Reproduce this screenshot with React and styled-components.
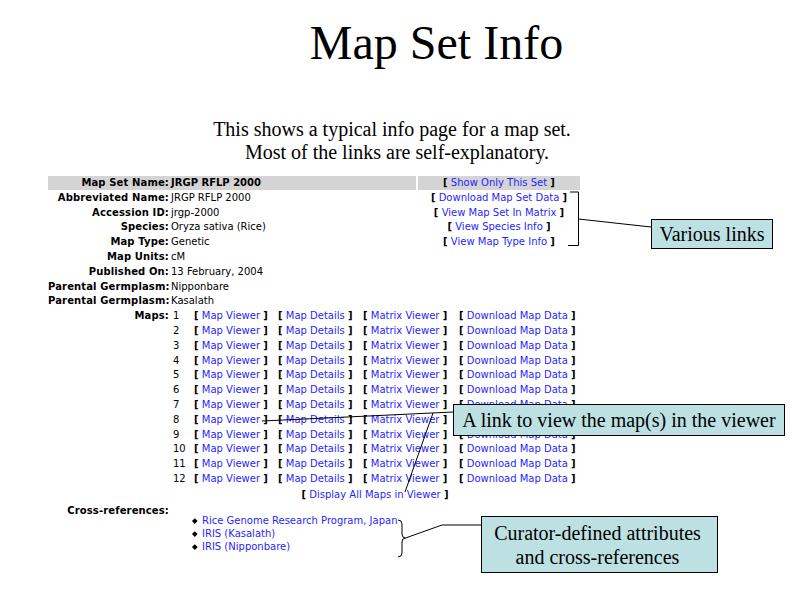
import React from "react";
import styled, { createGlobalStyle } from "styled-components";

const GlobalStyle = createGlobalStyle`
  html, body {
    margin: 0;
    padding: 0;
    background: #fff;
  }
`;

const Slide = styled.div`
  position: relative;
  width: 800px;
  height: 600px;
  overflow: hidden;
  background: #fff;
`;

const Title = styled.h1`
  margin: 19px 0 0;
  padding-left: 73px;
  text-align: center;
  font-family: "Liberation Serif", "Times New Roman", serif;
  font-weight: normal;
  font-size: 48px;
  line-height: 48px;
  color: #000;
`;

const Intro = styled.div`
  margin-top: 50.5px;
  font-family: "Liberation Serif", "Times New Roman", serif;
  font-size: 20px;
  line-height: 23px;
  color: #000;
`;

// $shift = how far the line's centre sits right of the page centre
const IntroLine = styled.div`
  text-align: center;
  padding-left: ${(p) => (p.$shift > 0 ? p.$shift * 2 : 0)}px;
  padding-right: ${(p) => (p.$shift < 0 ? -p.$shift * 2 : 0)}px;
`;

const Info = styled.div`
  margin: 12.5px 0 0 48px;
  width: 532px;
  font-family: "DejaVu Sans", sans-serif;
  font-size: 10px;
  color: #000;
  white-space: nowrap;
`;

const Row = styled.div`
  display: grid;
  grid-template-columns: 122px 246px 164px;
  height: 14.8px;
  line-height: 14px;
`;

const Label = styled.div`
  height: 14px;
  padding-right: 1px;
  text-align: right;
  font-weight: bold;
  letter-spacing: 0.13px;
  background: ${(p) => (p.$shaded ? "#d4d4d4" : "transparent")};
`;

const Value = styled.div`
  height: 14px;
  padding-left: 1px;
  font-weight: ${(p) => (p.$strong ? "bold" : "normal")};
  background: ${(p) => (p.$shaded ? "#d4d4d4" : "transparent")};
`;

const Side = styled.div`
  height: 14px;
  margin-left: 2px;
  text-align: center;
  background: ${(p) => (p.$shaded ? "#d4d4d4" : "transparent")};
`;

const MapsRow = styled.div`
  display: grid;
  grid-template-columns: 122px 410px;
  line-height: 14px;
`;

const MapGrid = styled.div`
  display: grid;
  grid-template-columns: 21px 84px 85px 96px auto;
  grid-auto-rows: 14.8px;
  padding-left: 3px;
`;

const AllMaps = styled.div`
  margin: 1px 0 0 122px;
  height: 16px;
  line-height: 14px;
  text-align: center;
`;

const CrossRow = styled.div`
  display: grid;
  grid-template-columns: 122px 410px;
  line-height: 14px;
`;

const RefList = styled.ul`
  margin: 10px 0 0;
  padding: 0 0 0 32px;
  list-style: none;
  line-height: 13.3px;
`;

const RefItem = styled.li`
  position: relative;

  &::before {
    content: "";
    position: absolute;
    left: -9.5px;
    top: 5px;
    width: 3.6px;
    height: 3.6px;
    background: #000;
    transform: rotate(45deg);
  }
`;

const Bracket = styled.span`
  font-weight: bold;
`;

const Link = styled.a`
  color: #1f1fff;
  text-decoration: none;
`;

const Note = styled.div`
  position: absolute;
  left: ${(p) => p.$x}px;
  top: ${(p) => p.$y}px;
  width: ${(p) => p.$w}px;
  box-sizing: border-box;
  padding: ${(p) => p.$pad};
  border: 1px solid #000;
  background: #bde0e3;
  font-family: "Liberation Serif", "Times New Roman", serif;
  font-size: 20px;
  line-height: ${(p) => p.$lh || 22}px;
  text-align: center;
  color: #000;
`;

const Overlay = styled.svg`
  position: absolute;
  left: 0;
  top: 0;
  width: 800px;
  height: 600px;
  pointer-events: none;

  path {
    fill: none;
    stroke: #000;
    stroke-width: 1;
  }
`;

const LinkBox = ({ children }) => (
  <span>
    <Bracket>[</Bracket> <Link href="#">{children}</Link> <Bracket>]</Bracket>
  </span>
);

const details = [
  ["Abbreviated Name:", "JRGP RFLP 2000", "Download Map Set Data"],
  ["Accession ID:", "jrgp-2000", "View Map Set In Matrix"],
  ["Species:", "Oryza sativa (Rice)", "View Species Info"],
  ["Map Type:", "Genetic", "View Map Type Info"],
  ["Map Units:", "cM"],
  ["Published On:", "13 February, 2004"],
  ["Parental Germplasm:", "Nipponbare"],
  ["Parental Germplasm:", "Kasalath"],
];

const maps = Array.from({ length: 12 }, (_, i) => i + 1);

const refs = [
  "Rice Genome Research Program, Japan",
  "IRIS (Kasalath)",
  "IRIS (Nipponbare)",
];

const App = () => {
  return (
    <Slide>
      <GlobalStyle />
      <Title>Map Set Info</Title>
      <Intro>
        <IntroLine $shift={-8}>
          This shows a typical info page for a map set.
        </IntroLine>
        <IntroLine $shift={-3}>Most of the links are self-explanatory.</IntroLine>
      </Intro>

      <Info>
        <Row>
          <Label $shaded>Map Set Name:</Label>
          <Value $shaded $strong>
            JRGP RFLP 2000
          </Value>
          <Side $shaded>
            <LinkBox>Show Only This Set</LinkBox>
          </Side>
        </Row>
        {details.map(([label, value, link], i) => (
          <Row key={i}>
            <Label>{label}</Label>
            <Value>{value}</Value>
            <Side>{link && <LinkBox>{link}</LinkBox>}</Side>
          </Row>
        ))}

        <MapsRow>
          <Label>Maps:</Label>
          <MapGrid>
            {maps.map((n) => (
              <React.Fragment key={n}>
                <span>{n}</span>
                <LinkBox>Map Viewer</LinkBox>
                <LinkBox>Map Details</LinkBox>
                <LinkBox>Matrix Viewer</LinkBox>
                <LinkBox>Download Map Data</LinkBox>
              </React.Fragment>
            ))}
          </MapGrid>
        </MapsRow>
        <AllMaps>
          <LinkBox>Display All Maps in Viewer</LinkBox>
        </AllMaps>

        <CrossRow>
          <Label>Cross-references:</Label>
          <RefList>
            {refs.map((r) => (
              <RefItem key={r}>
                <Link href="#">{r}</Link>
              </RefItem>
            ))}
          </RefList>
        </CrossRow>
      </Info>

      <Overlay viewBox="0 0 800 600">
        <path d="M570 192 H578.5 V245.5 H568" />
        <path d="M578.5 219 L651 227" />
        <path d="M262 421 L453 412" />
        <path d="M433 413 L405 492" />
        <path d="M398 520 Q402 520 402 524 V534 Q402 538 405.5 538 Q402 538 402 542 V553 Q402 557 398 557" />
        <path d="M405.5 538 L442 525 L481 525" />
      </Overlay>

      <Note $x={651} $y={219} $w={122} $pad="3px 0">
        Various links
      </Note>
      <Note $x={453} $y={404} $w={332} $pad="4px 0">
        A link to view the map(s) in the viewer
      </Note>
      <Note $x={481} $y={516} $w={237} $lh={24} $pad="4px 4px 3px 0">
        Curator-defined attributes
        <br />
        and cross-references
      </Note>
    </Slide>
  );
};

export default App;
